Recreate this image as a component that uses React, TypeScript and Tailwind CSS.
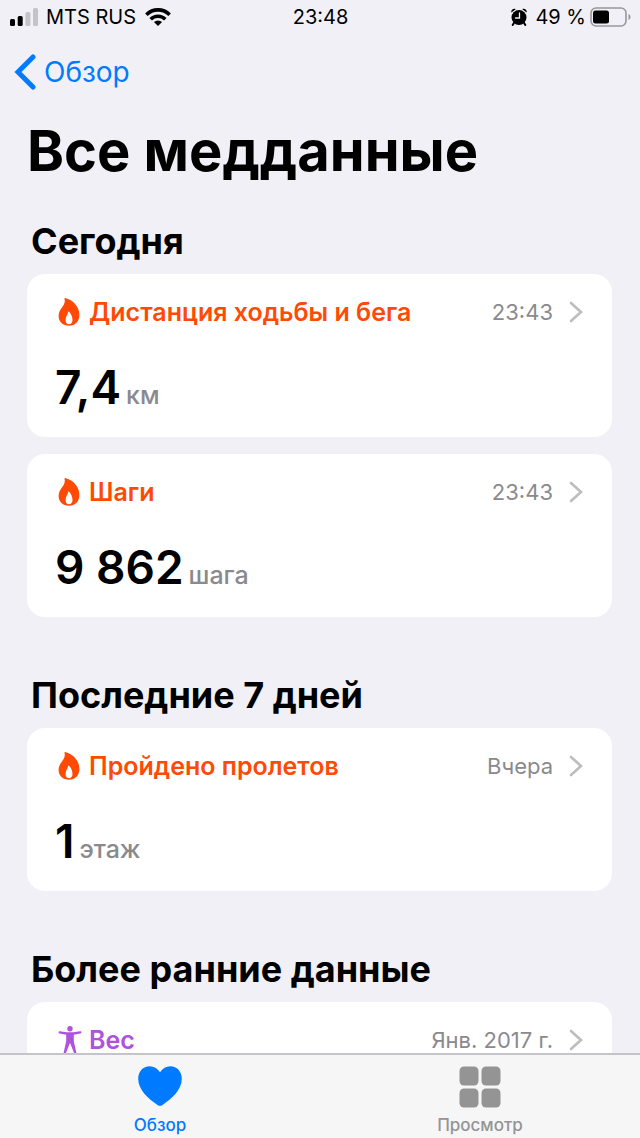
import { useState } from 'react';

type Kind = 'activity' | 'body';

interface HealthItem {
  id: string;
  title: string;
  kind: Kind;
  date: string;
  value: string;
  unit: string;
}

interface HealthGroup {
  title: string;
  items: HealthItem[];
}

const groups: HealthGroup[] = [
  {
    title: 'Сегодня',
    items: [
      { id: 'distance', title: 'Дистанция ходьбы и бега', kind: 'activity', date: '23:43', value: '7,4', unit: 'км' },
      { id: 'steps', title: 'Шаги', kind: 'activity', date: '23:43', value: '9 862', unit: 'шага' },
    ],
  },
  {
    title: 'Последние 7 дней',
    items: [
      { id: 'flights', title: 'Пройдено пролетов', kind: 'activity', date: 'Вчера', value: '1', unit: 'этаж' },
    ],
  },
  {
    title: 'Более ранние данные',
    items: [
      { id: 'weight', title: 'Вес', kind: 'body', date: 'Янв. 2017 г.', value: '', unit: '' },
    ],
  },
];

const FlameIcon = () => (
  <svg width="22" height="28" viewBox="0 0 22 28" aria-hidden="true">
    <path
      fill="#ff4a05"
      fillRule="evenodd"
      d="M6.600 1.400C6.200.4 6.900-.1 7.800.2 15.600 2.200 21.400 9 21.400 17c0 6.400-4.200 10.700-10.400 10.700C4.900 27.700.6 23.700.6 18c0-3.600 1.500-6 3.500-8.800C6 6.600 7.300 4.400 6.600 1.400ZM11.100 13.800c-.3-.4-.8-.3-.9.3-.3 2.300-2.600 4.500-2.600 7.900 0 2.700 1.300 4.300 3.400 4.300s3.500-1.600 3.500-4.200c0-3.200-1.400-6.100-3.400-8.300Z"
    />
  </svg>
);

const BodyIcon = () => (
  <svg width="24" height="28" viewBox="0 0 24 28" fill="#af52de" aria-hidden="true">
    <circle cx="12" cy="2.800" r="2.700" />
    <path d="M1.800 5.300 8.600 6.200h6.800l6.800-.9c1.500-.1 1.700 2 .2 2.300L15.800 8.800v6.400l2.500 11.200c.3 1.500-1.900 2-2.300.5L12.300 17.400h-.6L8 26.900c-.4 1.500-2.600 1-2.300-.5l2.500-11.200V8.800L1.600 7.600C.1 7.300.3 5.200 1.800 5.300Z" />
  </svg>
);

const ChevronRight = () => (
  <svg width="14" height="22" viewBox="0 0 14 22" fill="none" stroke="#bdbdc0" strokeWidth="2.600" strokeLinecap="round" aria-hidden="true">
    <path d="M2 2l10 9L2 20" />
  </svg>
);

const StatusBar = () => (
  <div className="grid h-[34px] shrink-0 grid-cols-3 items-center pl-[10px] pr-[9px] text-xl text-black">
    <div className="flex items-center gap-2">
      <svg width="28" height="18" viewBox="0 0 28 18" aria-hidden="true">
        <rect x="0" y="11" width="5" height="7" rx="1.500" />
        <rect x="7.700" y="8" width="5" height="10" rx="1.500" />
        <rect x="15.400" y="4" width="5" height="14" rx="1.500" fill="#c3c3c8" />
        <rect x="23" y="0" width="5" height="18" rx="1.500" fill="#c3c3c8" />
      </svg>
      <span className="whitespace-nowrap">MTS RUS</span>
      <svg width="28" height="18" viewBox="0 0 26 18" fill="none" stroke="#000" strokeWidth="3.600" aria-hidden="true">
        <path d="M1.400 6.700a16.400 16.400 0 0 1 23.200 0" />
        <path d="M5.700 11.200a10.400 10.400 0 0 1 14.600 0" />
        <path fill="#000" stroke="none" d="M8.900 14.100a5.900 5.900 0 0 1 8.200 0L13 18Z" />
      </svg>
    </div>
    <span className="text-center">23:48</span>
    <div className="flex items-center justify-end gap-1">
      <svg width="16" height="18" viewBox="0 0 16 18" className="mr-1" aria-hidden="true">
        <circle cx="8" cy="9.500" r="7.500" />
        <path d="M.3 4.600C-.3 2 2.400-.2 4.800 1.200ZM15.700 4.600C16.300 2 13.600-.2 11.200 1.200Z" />
        <path d="M3.200 14.500 1.700 17M12.800 14.500l1.500 2.500" stroke="#000" strokeWidth="2" strokeLinecap="round" />
        <path d="M8.500 5v5H4.500" fill="none" stroke="#f1f0f6" strokeWidth="1.300" strokeLinecap="round" />
      </svg>
      <span className="whitespace-nowrap">49 %</span>
      <svg width="41" height="20" viewBox="0 0 41 20" aria-hidden="true">
        <rect x="1" y="1" width="35" height="18" rx="5" fill="none" stroke="#98989c" strokeWidth="1.600" />
        <rect x="3" y="3.500" width="16" height="13" rx="2.500" />
        <path d="M38.500 7v6c1.300-.5 2-1.600 2-3s-.7-2.500-2-3Z" fill="#98989c" />
      </svg>
    </div>
  </div>
);

const HealthCard = ({ item }: { item: HealthItem }) => (
  <a href={`#${item.id}`} className="block rounded-[18px] bg-white pt-5 pr-[29px] pb-3 pl-7">
    <div className="flex h-9 items-center">
      <span className="flex w-[34px] shrink-0 items-center pl-[3px]">
        {item.kind === 'activity' ? <FlameIcon /> : <BodyIcon />}
      </span>
      <h3 className={`flex-1 text-[25px] leading-8 font-semibold ${item.kind === 'activity' ? 'text-[#ff4a05]' : 'text-[#af52de]'}`}>
        {item.title}
      </h3>
      <span className="mr-4 text-[22px] leading-8 text-[#8a8a8e]">{item.date}</span>
      <ChevronRight />
    </div>
    {item.value && (
      <p className="mt-[29px] flex h-[66px] items-baseline gap-[5px] leading-[56px]">
        <span className="text-[46px] font-semibold text-black">{item.value}</span>
        <span className="text-[25px] font-medium text-[#8a8a8e]">{item.unit}</span>
      </p>
    )}
  </a>
);

const App = () => {
  const [tab, setTab] = useState<'summary' | 'browse'>('summary');

  return (
    <div className="flex h-screen flex-col bg-[#f1f0f6] font-['Inter','Liberation_Sans',sans-serif]">
      <StatusBar />

      <nav className="flex h-[76px] shrink-0 items-center pl-[14px]">
        <a href="#summary" className="flex items-center gap-2 text-[28px] text-[#007aff]">
          <svg width="22" height="36" viewBox="0 0 22 36" fill="none" stroke="currentColor" strokeWidth="5" strokeLinecap="round" strokeLinejoin="miter" aria-hidden="true">
            <path d="M19 3 4 18l15 15" />
          </svg>
          Обзор
        </a>
      </nav>

      {/* Scrollable list */}
      <main className="min-h-0 flex-1 overflow-y-auto pt-[7px] pr-7 pl-[27px] [scrollbar-width:none]">
        <h1 className="text-[56px] leading-[68px] font-bold text-black">Все медданные</h1>
        <div className="mt-[34px] space-y-14">
          {groups.map((group) => (
            <section key={group.title}>
              <h2 className="mb-[11px] pl-1 text-[36px] leading-[44px] font-bold text-black">{group.title}</h2>
              <div className="space-y-[17px]">
                {group.items.map((item) => (
                  <HealthCard key={item.id} item={item} />
                ))}
              </div>
            </section>
          ))}
        </div>
      </main>

      {/* Tab bar */}
      <footer className="grid h-[85px] shrink-0 grid-cols-2 border-t-2 border-[#c5c5c9] bg-[#f6f6f7]">
        <button
          type="button"
          onClick={() => setTab('summary')}
          className={`flex flex-col items-center pt-[11px] text-[17px] leading-5 font-medium ${tab === 'summary' ? 'text-[#007aff]' : 'text-[#949494]'}`}
        >
          <svg width="44" height="40" viewBox="0 0 44 40" fill="currentColor" className="mb-[9px]" aria-hidden="true">
            <path d="M22 6.300C24.500 2.400 28.300.3 32.300.3 39 .3 43.800 5.600 43.800 13c0 11-10.600 20.100-19.300 25.900-1.800 1.200-3.200 1.200-5 0C10.800 33.100.2 24 .2 13 .2 5.600 5 .3 11.700.3c4 0 7.800 2.100 10.300 6Z" />
          </svg>
          Обзор
        </button>
        <button
          type="button"
          onClick={() => setTab('browse')}
          className={`flex flex-col items-center pt-[11px] text-[17px] leading-5 font-medium ${tab === 'browse' ? 'text-[#007aff]' : 'text-[#949494]'}`}
        >
          <svg width="42" height="42" viewBox="0 0 42 42" fill="currentColor" className="mb-[7px]" aria-hidden="true">
            <rect x="0.500" y="0.500" width="19" height="19" rx="4.500" />
            <rect x="22.500" y="0.500" width="19" height="19" rx="4.500" />
            <rect x="0.500" y="22.500" width="19" height="19" rx="4.500" />
            <rect x="22.500" y="22.500" width="19" height="19" rx="4.500" />
          </svg>
          Просмотр
        </button>
      </footer>
    </div>
  );
};

export default App;
